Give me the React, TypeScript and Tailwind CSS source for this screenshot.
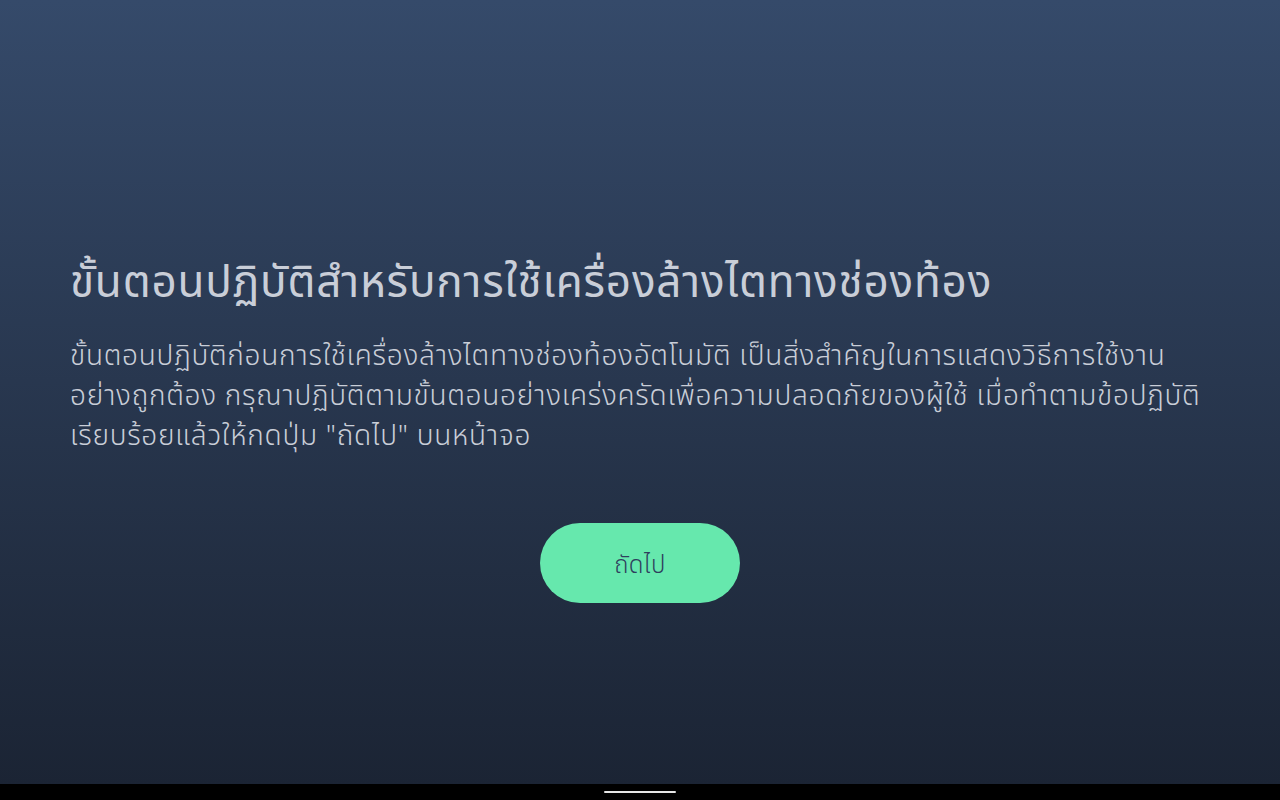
import React from "react";

export default function App() {
  return (
    <div
      className="w-[1280px] h-[800px] flex flex-col overflow-hidden"
      style={{ fontFamily: '"Noto Sans Thai", "Noto Sans Thai UI", "Noto Sans", "DejaVu Sans", sans-serif' }}
    >
      <div className="h-[784px] bg-gradient-to-b from-[#354a6a] to-[#1b2434] flex flex-col px-[70px] pt-[254px]">
        <h1 className="text-[44px] leading-[60px] text-[#c9ced8] font-normal tracking-[0.8px] whitespace-nowrap">
          ขั้นตอนปฏิบัติสำหรับการใช้เครื่องล้างไตทางช่องท้อง
        </h1>
        <p className="mt-[23px] text-[28px] leading-[40px] text-[#c9ced8] font-light tracking-[0.75px] whitespace-nowrap">
          ขั้นตอนปฏิบัติก่อนการใช้เครื่องล้างไตทางช่องท้องอัตโนมัติ เป็นสิ่งสำคัญในการแสดงวิธีการใช้งาน
          <br />
          อย่างถูกต้อง กรุณาปฏิบัติตามขั้นตอนอย่างเคร่งครัดเพื่อความปลอดภัยของผู้ใช้ เมื่อทำตามข้อปฏิบัติ
          <br />
          เรียบร้อยแล้วให้กดปุ่ม "ถัดไป" บนหน้าจอ
        </p>
        <div className="flex justify-center mt-[66px]">
          <button className="w-[200px] h-[80px] pt-[6px] rounded-full bg-[#66e8ad] text-[#2e405d] text-[24px] font-light tracking-[0.5px]">
            ถัดไป
          </button>
        </div>
      </div>
      <div className="h-[16px] bg-black flex items-center justify-center">
        <div className="w-[72px] h-[2px] bg-[#e6e6e6] rounded-full" />
      </div>
    </div>
  );
}
